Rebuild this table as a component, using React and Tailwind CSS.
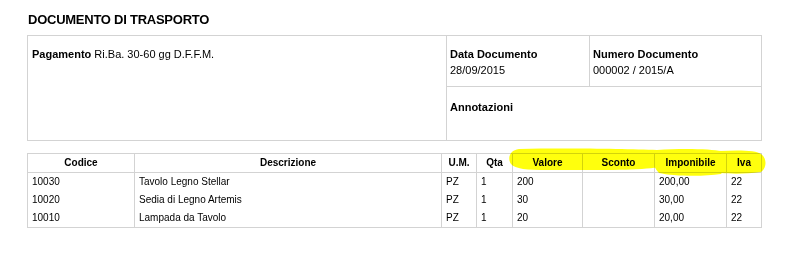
import React from "react";

const rows = [
  { codice: "10030", descr: "Tavolo Legno Stellar", um: "PZ", qta: "1", valore: "200", sconto: "", imp: "200,00", iva: "22" },
  { codice: "10020", descr: "Sedia di Legno Artemis", um: "PZ", qta: "1", valore: "30", sconto: "", imp: "30,00", iva: "22" },
  { codice: "10010", descr: "Lampada da Tavolo", um: "PZ", qta: "1", valore: "20", sconto: "", imp: "20,00", iva: "22" },
];

const Highlight = () => (
  <svg
    className="absolute left-[480px] top-[-5px] mix-blend-multiply pointer-events-none"
    width="262"
    height="32"
    viewBox="0 0 262 32"
  >
    <g fill="#ffff00" opacity="0.95">
      <path d="M12 1 C60 0 120 1 150 2 C158 3 160 10 156 17 C150 23 90 22 40 22 C20 22 8 21 4 16 C0 10 3 2 12 1 Z" />
      <path d="M150 2 C175 0 205 1 214 3 C220 8 220 20 214 26 C195 29 165 28 152 25 C145 18 144 8 150 2 Z" />
      <path d="M212 3 C230 2 250 2 254 6 C260 10 260 20 254 24 C240 26 225 26 214 25 C210 18 209 9 212 3 Z" />
    </g>
  </svg>
);

export default function App() {
  const th = "border border-[#d3d3d3] font-bold text-center h-[19px] p-0";
  const td = "border-x border-[#d3d3d3] h-[18px] px-[4px] py-0 text-left";
  return (
    <div className="bg-white w-[788px] h-[262px] text-black text-[11px] leading-[14px] font-['Liberation_Sans',Arial,sans-serif]">
      <div className="pl-[27px] pt-[12px]">
        <h1 className="text-[13px] leading-[16px] font-bold tracking-[-0.25px] pl-[1px]">DOCUMENTO DI TRASPORTO</h1>

        <div className="mt-[7px] w-[735px] h-[106px] border border-[#d3d3d3] flex">
          <div className="w-[419px] border-r border-[#d3d3d3] pt-[11px] pl-[4px]">
            <span className="font-bold">Pagamento</span> Ri.Ba. 30-60 gg D.F.F.M.
          </div>
          <div className="flex-1 flex flex-col">
            <div className="h-[51px] flex border-b border-[#d3d3d3]">
              <div className="w-[143px] border-r border-[#d3d3d3] pt-[11px] pl-[3px] flex flex-col gap-[2px]">
                <span className="font-bold">Data Documento</span>
                <span>28/09/2015</span>
              </div>
              <div className="flex-1 pt-[11px] pl-[3px] flex flex-col gap-[2px]">
                <span className="font-bold">Numero Documento</span>
                <span>000002 / 2015/A</span>
              </div>
            </div>
            <div className="flex-1 pt-[13px] pl-[3px] font-bold">Annotazioni</div>
          </div>
        </div>

        <div className="relative mt-[12px] w-[734px] text-[10px] leading-[12px]">
          <table className="w-[734px] border-collapse table-fixed border border-[#d3d3d3]">
            <colgroup>
              <col className="w-[107px]" />
              <col className="w-[307px]" />
              <col className="w-[35px]" />
              <col className="w-[36px]" />
              <col className="w-[70px]" />
              <col className="w-[72px]" />
              <col className="w-[72px]" />
              <col className="w-[35px]" />
            </colgroup>
            <thead>
              <tr>
                <th className={th}>Codice</th>
                <th className={th}>Descrizione</th>
                <th className={th}>U.M.</th>
                <th className={th}>Qta</th>
                <th className={th}>Valore</th>
                <th className={th}>Sconto</th>
                <th className={th}>Imponibile</th>
                <th className={th}>Iva</th>
              </tr>
            </thead>
            <tbody>
              {rows.map((r) => (
                <tr key={r.codice}>
                  <td className={td}>{r.codice}</td>
                  <td className={td}>{r.descr}</td>
                  <td className={td}>{r.um}</td>
                  <td className={td}>{r.qta}</td>
                  <td className={td}>{r.valore}</td>
                  <td className={td}>{r.sconto}</td>
                  <td className={td}>{r.imp}</td>
                  <td className={td}>{r.iva}</td>
                </tr>
              ))}
              <tr>
                <td colSpan={8} className="h-[1px] p-0 border-x border-[#d3d3d3]"></td>
              </tr>
            </tbody>
          </table>
          <Highlight />
        </div>
      </div>
    </div>
  );
}
